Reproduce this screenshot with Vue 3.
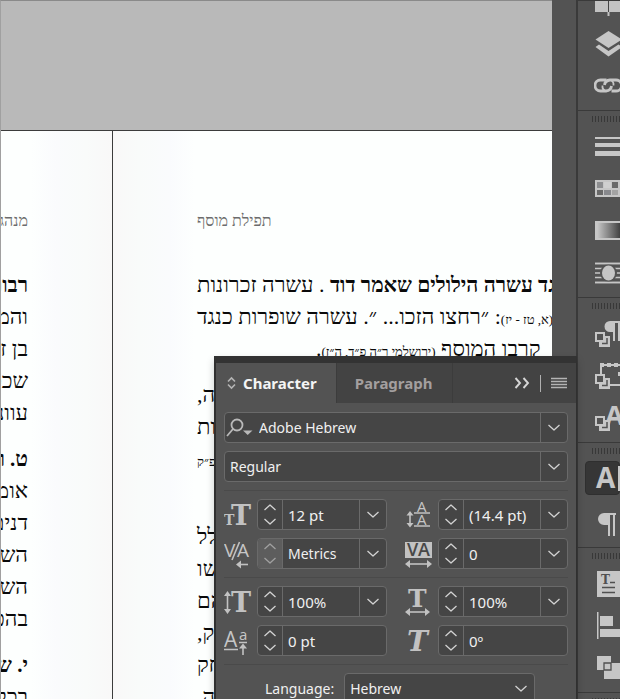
<script setup>
import { ref } from 'vue'

const activeTab = ref('Character')

const leftPage = [
  [{ text: 'רבותינו', bold: true }],
  [{ text: 'והמלאכים' }],
  [{ text: 'בן זומא' }],
  [{ text: 'שכסדר' }],
  [{ text: 'עוונותיו' }],
  [{ text: 'ט. ובזה', bold: true }],
  [{ text: 'אומרים' }],
  [{ text: 'דנים את' }],
  [{ text: 'השופר' }],
  [{ text: 'השופר' }],
  [{ text: 'בהכרח' }],
  [{ text: 'י. שלש', bold: true }],
  [{ text: 'בכלל' }],
]
const leftStarts = [5, 11]

const rightPage = [
  [{ text: 'כנגד עשרה הילולים שאמר דוד', bold: true }, { text: ' . עשרה זכרונות' }],
  [{ text: '(א, טז - יז)', small: true }, { text: ': ״רחצו הזכו... ״. עשרה שופרות כנגד' }],
  [{ text: 'קרבו המוסף ' }, { text: '(ירושלמי ר״ה פ״ד, ה״ז)', small: true }, { text: '.' }],
  [{ text: 'תפילה,' }],
  [{ text: 'זכרונות' }],
  [{ text: 'ר״ה פ״ק', small: true }],
  [{ text: '\u00a0' }],
  [{ text: 'בכלל' }],
  [{ text: 'ראשו' }],
  [{ text: 'שהם' }],
  [{ text: 'פסוק,' }],
  [{ text: 'יצחק' }],
  [{ text: 'תורה.' }],
]
const rightStarts = [3, 7]

const fieldRows = [
  [
    { icon: 'size', label: 'Font size', value: '12 pt', menu: true },
    { icon: 'leading', label: 'Leading', value: '(14.4 pt)', menu: true },
    { icon: 'kerning', label: 'Kerning', value: 'Metrics', menu: true, dim: true },
    { icon: 'tracking', label: 'Tracking', value: '0', menu: true },
  ],
  [
    { icon: 'vscale', label: 'Vertical scale', value: '100%', menu: true },
    { icon: 'hscale', label: 'Horizontal scale', value: '100%', menu: true },
    { icon: 'baseline', label: 'Baseline shift', value: '0 pt' },
    { icon: 'skew', label: 'Skew', value: '0º' },
  ],
]

const dockGroups = [
  ['pages', 'layers', 'links'],
  ['stroke', 'swatches', 'gradient', 'wrap'],
  ['parastyles', 'objstyles', 'charstyles'],
  ['character', 'paragraph'],
  ['story', 'align', 'pathfinder'],
  ['effects'],
]
</script>

<template>
  <div class="workspace">
    <main class="canvas">
      <div class="pasteboard"></div>
      <div class="spread" lang="he">
        <section class="page page-left" dir="rtl">
          <p class="running">מנהגי</p>
          <p v-for="(line, i) in leftPage" :key="i" class="line" :class="{ start: leftStarts.includes(i) }">
            <span v-for="(s, j) in line" :key="j" :class="{ bold: s.bold }">{{ s.text }}</span>
          </p>
        </section>
        <section class="page page-right">
          <p class="running" dir="rtl">תפילת מוסף</p>
          <p
            v-for="(line, i) in rightPage"
            :key="i"
            class="line"
            dir="rtl"
            :class="{ start: rightStarts.includes(i), closing: i === 2 }"
          >
            <span v-for="(s, j) in line" :key="j" :class="{ bold: s.bold, small: s.small }">{{ s.text }}</span>
          </p>
        </section>
      </div>
    </main>

    <aside class="dock">
      <div v-for="(group, g) in dockGroups" :key="g" class="dock-group">
        <div v-if="g > 0" class="grip"></div>
        <button
          v-for="name in group"
          :key="name"
          type="button"
          class="dock-button"
          :class="{ first: name === 'pages', active: name === 'character' }"
          :aria-label="name"
        >
          <svg width="30" height="30" viewBox="0 0 30 30" aria-hidden="true">
            <g v-if="name === 'pages'" fill="#c2c2c2">
              <path d="M1 6h13v18H1zM15 6h14v18H15z" />
              <path d="M13.500 24h2v4h-2z" />
              <path d="M14 6h1v18h-1z" fill="#444" />
            </g>
            <g v-else-if="name === 'layers'" fill="#c6c6c6">
              <path d="M14.500 3L28 11.500 14.500 20 1.500 11.500z" />
              <path d="M1.500 19l3.500-2.500 9.500 6.500 10-6.500L28 19l-13.500 9.500z" />
            </g>
            <g v-else-if="name === 'links'" fill="none" stroke="#c6c6c6" stroke-width="2.800">
              <path d="M12.500 10H6.500a5 5 0 0 0 0 11h5.500q5-.5 5.500-5" />
              <path d="M17.500 21h4.500a5 5 0 0 0 0-11h-6q-5 .5-5.500 5" />
              <path d="M16.500 10q3.500 1.500 3 5.500M11.500 21q-3.500-1.500-3-5.500" stroke-width="1.800" />
            </g>
            <g v-else-if="name === 'stroke'" fill="#c6c6c6">
              <path d="M1 6h28v2H1zM1 12h28v4H1zM1 20h28v5H1z" />
            </g>
            <g v-else-if="name === 'swatches'">
              <path d="M1 7h28v17H1z" fill="#c6c6c6" />
              <path d="M3 9h6v6H3zM27 9h2v6h-2z" fill="#8d8e90" />
              <path d="M18 9h6v6h-6zM3 17h6v5H3z" fill="#696969" />
              <path d="M10 9h7v6h-7z" fill="#cfcfcf" />
              <path d="M10 17h7v5h-7z" fill="#88898d" />
              <path d="M18 17h6v5h-6z" fill="#a3a3a3" />
            </g>
            <g v-else-if="name === 'gradient'">
              <defs>
                <linearGradient id="swatch-ramp">
                  <stop offset="0" stop-color="#c8c8c8" />
                  <stop offset="1" stop-color="#3c3c3c" />
                </linearGradient>
              </defs>
              <path d="M1 6h28v19H1z" fill="#c6c6c6" />
              <path d="M3 8h24v15H3z" fill="url(#swatch-ramp)" />
            </g>
            <g v-else-if="name === 'wrap'">
              <path d="M1 6.500h28M1 11.500h28M1 16h28M1 20.500h28M1 25.500h28" stroke="#c6c6c6" stroke-width="1.700" />
              <ellipse cx="14.500" cy="16" rx="8.500" ry="9" fill="#535353" />
              <path d="M1 6.500h28M1 25.500h28" stroke="#c6c6c6" stroke-width="1.700" />
              <ellipse cx="14.500" cy="16" rx="6.500" ry="7.500" fill="#c6c6c6" />
            </g>
            <g v-else-if="['parastyles', 'objstyles', 'charstyles'].includes(name)">
              <path
                v-if="name === 'parastyles'"
                d="M28 3H16a5.500 5.500 0 0 0 0 11h3v9h2V5h3v18h2V5h2z"
                fill="#c6c6c6"
              />
              <g v-else-if="name === 'objstyles'" fill="none" stroke="#c6c6c6">
                <path d="M7 14V5h20v20H15" stroke-width="2" />
                <path d="M6 5h4M13 5h4M20 5h4M26 12v4" stroke-width="4" />
              </g>
              <text v-else x="11" y="23" class="glyph bolder" font-size="27">A</text>
              <path d="M8 18h8v11H5v-8h3z" fill="#c6c6c6" />
              <path d="M2 15h8v8H2z" fill="#535353" stroke="#c6c6c6" stroke-width="2" />
              <path d="M13 20v5.500H8" fill="none" stroke="#535353" stroke-width="1.500" />
            </g>
            <g v-else-if="name === 'character'">
              <text x="2" y="25" class="glyph bolder" font-size="28">A</text>
              <path d="M24 3h2v25h-2z" fill="#c6c6c6" />
            </g>
            <path
              v-else-if="name === 'paragraph'"
              d="M22 6H10a6 6 0 0 0 0 12h4v11h2V8h3v21h2V8h1z"
              fill="#c6c6c6"
            />
            <g v-else-if="name === 'story'">
              <path d="M3 3h27v26H3z" fill="#c6c6c6" />
              <text x="7" y="16" class="serif-glyph" font-size="12" fill="#505050">T</text>
              <path d="M16 14.500h5M8 19.500h13M8 24.500h13" stroke="#505050" stroke-width="1.500" />
            </g>
            <g v-else-if="name === 'align'" fill="#c6c6c6">
              <path d="M3 2h1.500v27H3zM6 6h13v10H6zM6 19h24v8H6z" />
            </g>
            <g v-else-if="name === 'pathfinder'" fill="#c6c6c6">
              <path d="M3 4h14v14H3z" />
              <path d="M10 11h17v16H10z" />
              <path d="M10 11h7v7h-7z" stroke="#505050" stroke-width="1.300" />
            </g>
          </svg>
        </button>
      </div>
    </aside>

    <section class="panel">
      <header class="tabs">
        <button type="button" class="tab" :class="{ current: activeTab === 'Character' }" @click="activeTab = 'Character'">
          <svg width="9" height="14" viewBox="0 0 9 14" aria-hidden="true">
            <path d="M1 5.500L4.500 2 8 5.500M1 8.500L4.500 12 8 8.500" fill="none" stroke="#b4b4b4" stroke-width="1.600" />
          </svg>
          Character
        </button>
        <button type="button" class="tab" :class="{ current: activeTab === 'Paragraph' }" @click="activeTab = 'Paragraph'">
          Paragraph
        </button>
        <div class="tab-tools">
          <button type="button" class="tool" aria-label="Collapse">
            <svg width="16" height="12" viewBox="0 0 16 12" aria-hidden="true">
              <path d="M1.500 1L6 6l-4.500 5M9.500 1L14 6l-4.500 5" fill="none" stroke="#d6d6d6" stroke-width="1.900" />
            </svg>
          </button>
          <span class="divider"></span>
          <button type="button" class="tool" aria-label="Panel menu">
            <svg width="16" height="12" viewBox="0 0 16 12" aria-hidden="true">
              <path d="M0 1.500h16M0 4.500h16M0 7.500h16M0 10.500h16" stroke="#b4b4b4" stroke-width="1.300" />
            </svg>
          </button>
        </div>
      </header>

      <form class="fields" @submit.prevent>
        <div class="box">
          <label class="search" for="family" aria-label="Font family">
            <svg width="27" height="20" viewBox="0 0 27 20" aria-hidden="true">
              <circle cx="11" cy="7" r="5.500" fill="none" stroke="#b9b9b9" stroke-width="1.800" />
              <path d="M7 11L1 18" stroke="#b9b9b9" stroke-width="1.800" />
              <path d="M17 12.500h9.500L21.700 17z" fill="#b9b9b9" />
            </svg>
          </label>
          <input id="family" class="value flush" type="text" value="Adobe Hebrew" />
          <button type="button" class="drop" aria-label="Show fonts">
            <svg width="12" height="7" viewBox="0 0 12 7" aria-hidden="true"><path d="M.5 1L6 6l5.500-5" /></svg>
          </button>
        </div>

        <div class="pick">
          <select aria-label="Font style">
            <option>Regular</option>
          </select>
          <span class="drop">
            <svg width="12" height="7" viewBox="0 0 12 7" aria-hidden="true"><path d="M.5 1L6 6l5.500-5" /></svg>
          </span>
        </div>

        <template v-for="(rows, r) in fieldRows" :key="r">
          <hr />
          <div class="pairs">
            <div v-for="f in rows" :key="f.icon" class="field">
              <label :for="f.icon" :aria-label="f.label">
                <svg width="28" height="30" viewBox="0 0 28 30" aria-hidden="true">
                  <g v-if="f.icon === 'size'">
                    <text x="0" y="25" class="serif-glyph" font-size="14">T</text>
                    <text x="7" y="25" class="serif-glyph" font-size="27">T</text>
                  </g>
                  <g v-else-if="f.icon === 'leading'">
                    <text x="12" y="12" class="glyph" font-size="15">A</text>
                    <text x="12" y="25" class="glyph" font-size="15">A</text>
                    <path d="M9 13h16M9 26h16" class="rule" />
                    <path d="M5 14v11" class="rule" />
                    <path d="M5 11l3.500 4.500h-7zM5 27.500l3.500-4.500h-7z" class="solid" />
                  </g>
                  <g v-else-if="f.icon === 'kerning'">
                    <text x="0" y="18" class="glyph" font-size="19">V</text>
                    <text x="13" y="18" class="glyph" font-size="19">A</text>
                    <path d="M15.500 3L8 21" class="rule" />
                    <path d="M15 25.500h9" class="rule" />
                    <path d="M12 25.500l5-4v8z" class="solid" />
                  </g>
                  <g v-else-if="f.icon === 'tracking'">
                    <path d="M0 3h27v16H0z" class="solid" />
                    <text x="2" y="17" class="cutout" font-size="18">V</text>
                    <text x="13" y="17" class="cutout" font-size="18">A</text>
                    <path d="M3 25h21" class="rule" />
                    <path d="M0 25l5-4v8zM27 25l-5-4v8z" class="solid" />
                  </g>
                  <g v-else-if="f.icon === 'vscale'">
                    <path d="M3.500 7v17" class="rule" />
                    <path d="M3.500 4l3.500 5H0zM3.500 27l3.500-5H0z" class="solid" />
                    <text x="7" y="25" class="serif-glyph" font-size="27">T</text>
                  </g>
                  <g v-else-if="f.icon === 'hscale'">
                    <text x="3" y="20" class="serif-glyph" font-size="25">T</text>
                    <path d="M3 25h19" class="rule" />
                    <path d="M0 25l5-4v8zM25 25l-5-4v8z" class="solid" />
                  </g>
                  <g v-else-if="f.icon === 'baseline'">
                    <text x="0" y="21" class="glyph" font-size="21">A</text>
                    <text x="15" y="14" class="glyph" font-size="15">a</text>
                    <path d="M0 23.500h14M15 16.500h8" class="rule" />
                    <path d="M19 20v9" class="rule" />
                    <path d="M19 17.500l4 5h-8z" class="solid" />
                  </g>
                  <text v-else x="2" y="25" class="serif-glyph slanted" font-size="28">T</text>
                </svg>
              </label>
              <div class="box">
                <div class="stepper" :class="{ dim: f.dim }">
                  <button type="button" :aria-label="`Increase ${f.label}`">
                    <svg width="12" height="7" viewBox="0 0 12 7" aria-hidden="true"><path d="M.5 6L6 1l5.500 5" /></svg>
                  </button>
                  <button type="button" :aria-label="`Decrease ${f.label}`">
                    <svg width="12" height="7" viewBox="0 0 12 7" aria-hidden="true"><path d="M.5 1L6 6l5.500-5" /></svg>
                  </button>
                </div>
                <input
                  :id="f.icon"
                  class="value"
                  :class="{ numeric: /\d/.test(f.value) }"
                  type="text"
                  :value="f.value"
                />
                <button v-if="f.menu" type="button" class="drop" :aria-label="`${f.label} presets`">
                  <svg width="12" height="7" viewBox="0 0 12 7" aria-hidden="true"><path d="M.5 1L6 6l5.500-5" /></svg>
                </button>
              </div>
            </div>
          </div>
        </template>

        <hr />
        <div class="language">
          <label for="language">Language:</label>
          <div class="pick plain">
            <select id="language">
              <option>Hebrew</option>
            </select>
            <span class="drop">
              <svg width="12" height="7" viewBox="0 0 12 7" aria-hidden="true"><path d="M.5 1L6 6l5.500-5" /></svg>
            </span>
          </div>
        </div>
      </form>
    </section>
  </div>
</template>

<style>
body {
  background: #535353;
}
</style>

<style scoped>
.workspace {
  position: relative;
  display: grid;
  grid-template-columns: minmax(0, 1fr) 43px;
  column-gap: 25px;
  height: 100vh;
  overflow: hidden;
  background: #535353;
  color: #f0f0f0;
  font-family: 'Noto Sans', 'Open Sans', sans-serif;
  font-size: 14px;
}
button,
input,
select {
  margin: 0;
  padding: 0;
  border: 0;
  background: none;
  color: inherit;
  font: inherit;
  appearance: none;
}
svg {
  display: block;
  flex: none;
}

/* Document */
.canvas {
  display: flex;
  flex-direction: column;
  min-height: 0;
  overflow: hidden;
  border-top: 1px solid #8a8a8a;
  border-left: 1px solid #a0a0a0;
  box-sizing: border-box;
}
.pasteboard {
  flex: none;
  height: 129px;
  background: #b9b9b9;
}
.spread {
  flex: 1;
  display: grid;
  grid-template-columns: 111px minmax(0, 1fr);
  min-height: 0;
  border-top: 1px solid #3c3c3c;
  color: #0a0a0a;
  font-family: 'Liberation Serif', serif;
  font-size: 22px;
}
.page {
  overflow: hidden;
  padding-top: 74px;
}
.page-left {
  padding-right: 84px;
  background: linear-gradient(to right, #fdfffe 30px, #fafbfd 55px, #f9fbfa 85px, #f9f8f8);
}
.page-right {
  padding-left: 84px;
  border-left: 1px solid #3c3c3c;
  background: linear-gradient(to right, #f9f8f8, #f9fbfa 26px, #fafbfd 56px, #fdfffe 82px);
}
.running {
  width: max-content;
  margin: 0 0 32px;
  color: #6c6c6c;
  font-size: 16px;
  line-height: 32px;
}
.line {
  width: max-content;
  height: 32px;
  margin: 0;
  line-height: 32px;
  white-space: pre;
}
.start {
  margin-top: 14px;
}
.closing {
  padding-left: 119px;
}
.line span {
  line-height: 1;
}
.bold {
  font-weight: bold;
  font-size: 21px;
}
.small {
  font-size: 13px;
}

/* Dock */
.dock {
  overflow: hidden;
  border-left: 2px solid #3a3a3a;
  margin-left: -1px;
}
.dock-group {
  display: flex;
  flex-direction: column;
  padding-bottom: 4px;
  border-bottom: 1px solid #3a3a3a;
}
.dock-group:first-child {
  border-top: 1px solid #3a3a3a;
}
.grip {
  height: 6px;
  margin: 5px 0 3px 14px;
  background: repeating-linear-gradient(to right, #383838 0 1px, #535353 1px 3px);
}
.dock-button {
  display: flex;
  align-items: center;
  height: 42px;
  margin-left: 7px;
  padding-left: 9px;
}
.dock-button.first {
  align-items: flex-end;
  height: 21px;
  overflow: hidden;
}
.dock-button.first svg {
  margin-bottom: 4px;
}
.dock-button.active {
  height: 34px;
  margin-top: 4px;
  margin-bottom: 6px;
  padding-left: 8px;
  border: 1px solid #2f2f2f;
  border-radius: 4px;
  box-sizing: border-box;
  background: #363636;
}
.glyph {
  fill: #c6c6c6;
  font-family: 'Open Sans', sans-serif;
}
.bolder {
  font-weight: bold;
}
.serif-glyph {
  font-family: 'DejaVu Serif', serif;
  font-weight: bold;
}
.field .serif-glyph {
  fill: #c2c2c2;
}
.slanted {
  font-style: italic;
}
.cutout {
  fill: #484848;
  font-family: 'Open Sans', sans-serif;
  font-weight: 600;
}
.rule {
  fill: none;
  stroke: #c2c2c2;
  stroke-width: 1.6;
}
.solid {
  fill: #c2c2c2;
}

/* Floating character panel */
.panel {
  position: absolute;
  top: 356px;
  right: 43px;
  width: 363px;
  box-sizing: border-box;
  border: 2px solid #303030;
  border-top: 7px solid #333;
  border-right-width: 1px;
  background: #535353;
  box-shadow: 0 4px 8px rgba(0, 0, 0, 0.2);
}
.tabs {
  display: flex;
  height: 40px;
  background: #434343;
}
.tab {
  display: flex;
  align-items: center;
  gap: 7px;
  padding: 0 20px 0 18px;
  border-right: 1px solid #3c3c3c;
  color: #a39f9f;
  font-size: 15px;
  font-weight: bold;
}
.tab.current {
  padding: 0 19px 0 11px;
  background: #535353;
  color: #f4f4f4;
}
.tab-tools {
  display: flex;
  align-items: center;
  gap: 10px;
  margin-left: auto;
  padding-right: 9px;
}
.divider {
  width: 1px;
  height: 17px;
  background: #b0b0b0;
}
.fields {
  display: flex;
  flex-direction: column;
  gap: 8px;
  padding: 9px 8px 8px;
}
.fields hr {
  width: 100%;
  height: 1px;
  margin: 0;
  border: 0;
  background: #4a4a4a;
}
.box,
.pick {
  height: 31px;
  box-sizing: border-box;
  border: 1px solid #6a6a6a;
  border-radius: 4px;
  background: #454545;
}
.box {
  display: flex;
  min-width: 0;
  overflow: hidden;
}
.drop svg path,
.stepper svg path {
  fill: none;
  stroke: #d2d2d2;
  stroke-width: 1.3;
  stroke-linejoin: round;
}
.search {
  display: flex;
  align-items: center;
  padding: 0 6px 0 1px;
}
.value {
  flex: 1;
  min-width: 0;
  width: 0;
  padding-left: 5px;
}
.value.flush {
  padding-left: 0;
}
.value.numeric {
  font-size: 15px;
}
.drop {
  display: flex;
  flex: none;
  align-items: center;
  justify-content: center;
  width: 27px;
  box-sizing: border-box;
  border-left: 1px solid #6a6a6a;
}
.stepper {
  display: flex;
  flex: none;
  flex-direction: column;
  width: 24px;
  border-right: 1px solid #6a6a6a;
}
.stepper button {
  display: flex;
  flex: 1;
  align-items: center;
  justify-content: center;
}
.stepper.dim {
  background: #5d5d5d;
}
.stepper.dim svg path {
  stroke: #a0a0a0;
}
.pick {
  display: grid;
  grid-template-columns: minmax(0, 1fr) 27px;
}
.pick select {
  grid-area: 1 / 1 / 2 / 3;
  padding-left: 5px;
}
.pick .drop {
  grid-area: 1 / 2;
  pointer-events: none;
}
.pick.plain .drop {
  border-left: 0;
}
.pairs {
  display: grid;
  grid-template-columns: repeat(2, minmax(0, 1fr));
  gap: 8px 18px;
}
.field {
  display: grid;
  grid-template-columns: 33px minmax(0, 1fr);
  align-items: center;
}
.language {
  display: flex;
  align-items: center;
  gap: 10px;
  padding: 0 33px 0 41px;
}
.language .pick {
  flex: 1;
}
</style>
